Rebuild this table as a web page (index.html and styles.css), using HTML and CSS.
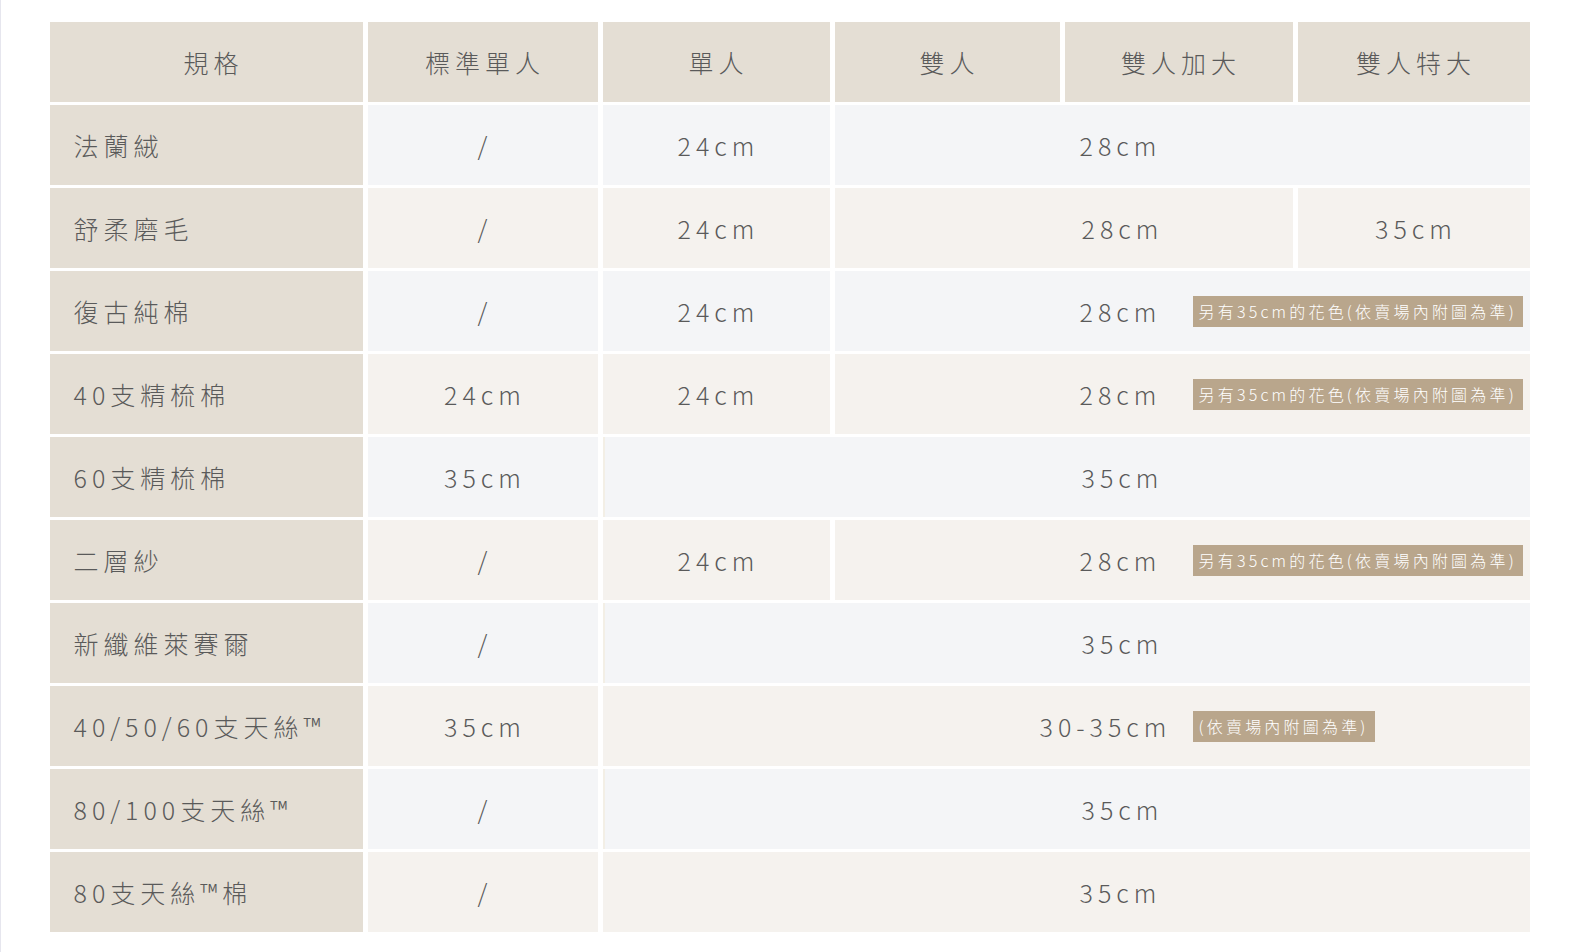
FILE: index.html
```html
<!DOCTYPE html>
<html lang="zh-Hant">
<head>
<meta charset="utf-8">
<title>床包高度規格</title>
<link rel="stylesheet" href="styles.css">
</head>
<body>
<div class="page">
  <div class="spec">
    <div class="cell head first">規格</div>
    <div class="cell head">標準單人</div>
    <div class="cell head">單人</div>
    <div class="cell head">雙人</div>
    <div class="cell head">雙人加大</div>
    <div class="cell head">雙人特大</div>

    <div class="cell label">法蘭絨</div>
    <div class="cell cool">/</div>
    <div class="cell cool">24cm</div>
    <div class="cell cool span3 from4">28cm</div>

    <div class="cell label">舒柔磨毛</div>
    <div class="cell warm">/</div>
    <div class="cell warm">24cm</div>
    <div class="cell warm span2 from4b">28cm</div>
    <div class="cell warm">35cm</div>

    <div class="cell label">復古純棉</div>
    <div class="cell cool">/</div>
    <div class="cell cool">24cm</div>
    <div class="cell cool span3 from4"><span class="val v28">28cm</span><span class="tag">另有35cm的花色(依賣場內附圖為準)</span></div>

    <div class="cell label">40支精梳棉</div>
    <div class="cell warm">24cm</div>
    <div class="cell warm">24cm</div>
    <div class="cell warm span3 from4"><span class="val v28">28cm</span><span class="tag">另有35cm的花色(依賣場內附圖為準)</span></div>

    <div class="cell label">60支精梳棉</div>
    <div class="cell cool">35cm</div>
    <div class="cell cool span4 from3 edge">35cm</div>

    <div class="cell label">二層紗</div>
    <div class="cell warm">/</div>
    <div class="cell warm">24cm</div>
    <div class="cell warm span3 from4"><span class="val v28">28cm</span><span class="tag">另有35cm的花色(依賣場內附圖為準)</span></div>

    <div class="cell label">新纖維萊賽爾</div>
    <div class="cell cool">/</div>
    <div class="cell cool span4 from3 edge">35cm</div>

    <div class="cell label">40/50/60支天絲™</div>
    <div class="cell warm">35cm</div>
    <div class="cell warm span4 from3w"><span class="val v3035">30-35cm</span><span class="tag">(依賣場內附圖為準)</span></div>

    <div class="cell label">80/100支天絲™</div>
    <div class="cell cool">/</div>
    <div class="cell cool span4 from3 edge">35cm</div>

    <div class="cell label">80支天絲™棉</div>
    <div class="cell warm">/</div>
    <div class="cell warm span4 from3">35cm</div>
  </div>
</div>
</body>
</html>
```

FILE: styles.css
```css
html, body {
  margin: 0;
  padding: 0;
  background: #ffffff;
}

body {
  font-family: "Noto Sans CJK TC", "Noto Sans", sans-serif;
  color: #5a5a5a;
}

.page {
  min-height: 952px;
  box-sizing: border-box;
  border-left: 1px solid #e6e6ee;
  padding: 22px 0 0 48.5px;
}

.spec {
  display: grid;
  grid-template-columns: 313px 230px 227px 225px 228px 232px;
  grid-auto-rows: 80px;
  column-gap: 5px;
  row-gap: 3px;
  width: 1480px;
}

.cell {
  display: flex;
  align-items: center;
  justify-content: center;
  font-size: 25px;
  font-weight: 300;
  letter-spacing: 0.2em;
  padding-left: 0.2em;
  white-space: nowrap;
  box-sizing: border-box;
}

.head {
  background: #e4ded4;
}

.head.first {
  padding-left: 15px;
}

.label {
  background: #e4ded4;
  justify-content: flex-start;
  padding-left: 24px;
}

.cool {
  background: #f4f5f7;
}

.warm {
  background: #f5f2ee;
}

.span2 { grid-column: span 2; }
.span3 { grid-column: span 3; }
.span4 { grid-column: span 4; }

.from4 {
  justify-content: flex-start;
  padding-left: 245px;
}

.from4b {
  justify-content: flex-start;
  padding-left: 247px;
}

.from3 {
  justify-content: flex-start;
  padding-left: 477px;
}

.from3w {
  justify-content: flex-start;
  padding-left: 437px;
}

.edge {
  border-left: 2px solid #f3efe6;
}

.val {
  display: inline-block;
}

.v28 {
  width: 113px;
}

.v3035 {
  width: 153px;
}

.tag {
  display: inline-block;
  height: 31px;
  line-height: 31px;
  padding: 0 6px;
  background: #b9a68c;
  color: #ffffff;
  font-size: 16px;
  font-weight: 300;
  letter-spacing: 0.2em;
  box-sizing: border-box;
}
```
